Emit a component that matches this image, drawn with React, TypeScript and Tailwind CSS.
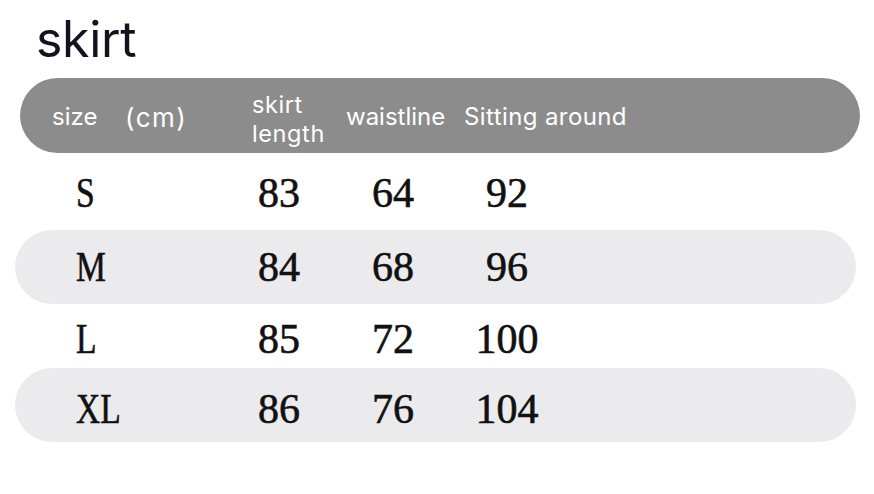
import React from "react";

const rows = [
  { size: "S", a: "83", b: "64", c: "92", shaded: false, h: "h-[77px]", pt: "pt-[4px]" },
  { size: "M", a: "84", b: "68", c: "96", shaded: true, h: "h-[74px]", pt: "pt-[1px]" },
  { size: "L", a: "85", b: "72", c: "100", shaded: false, h: "h-[64px]", pt: "pt-[6px]" },
  { size: "XL", a: "86", b: "76", c: "104", shaded: true, h: "h-[74px]", pt: "pt-[9px]" },
];

export default function App() {
  const sans = { fontFamily: "Inter, 'Noto Sans', sans-serif" };
  const serif = { fontFamily: "'Liberation Serif', 'Times New Roman', serif" };
  return (
    <div className="w-[874px] h-[494px] bg-white overflow-hidden">
      <div className="h-[78px] pl-[36px] pt-[14px]">
        <div className="text-[50px] leading-none text-[#15121f] tracking-[-0.3px]" style={sans}>
          skirt
        </div>
      </div>
      <div
        className="ml-[20px] w-[840px] h-[75px] rounded-full bg-[#8c8c8c] flex items-center text-white text-[24px] pl-[32px]"
        style={sans}
      >
        <div className="w-[73px] pt-[3px]">size</div>
        <div className="w-[127px] pt-[3px] text-[26px] tracking-[1.5px]">(cm)</div>
        <div className="w-[94px] pt-[8px] text-[23.5px] tracking-[0.6px] flex flex-col">
          <div className="h-[28.5px] leading-[28.5px]">skirt</div>
          <div className="h-[28.5px] leading-[28.5px]">length</div>
        </div>
        <div className="w-[118px] pt-[3px]">waistline</div>
        <div className="pt-[3px] tracking-[0.4px]">Sitting around</div>
      </div>
      {rows.map((r) => (
        <div
          key={r.size}
          className={`ml-[15px] w-[841px] ${r.h} rounded-full flex items-center text-[42px] text-[#111] [-webkit-text-stroke:0.6px_#111] ${
            r.shaded ? "bg-[#ebebed]" : ""
          }`}
          style={serif}
        >
          <div className={`w-[207px] pl-[61px] ${r.pt}`}>
            <span className="inline-block origin-left scale-x-[0.8]">{r.size}</span>
          </div>
          <div className={`w-[114px] text-center ${r.pt}`}>{r.a}</div>
          <div className={`w-[114px] text-center ${r.pt}`}>{r.b}</div>
          <div className={`w-[114px] text-center ${r.pt}`}>{r.c}</div>
        </div>
      ))}
    </div>
  );
}
